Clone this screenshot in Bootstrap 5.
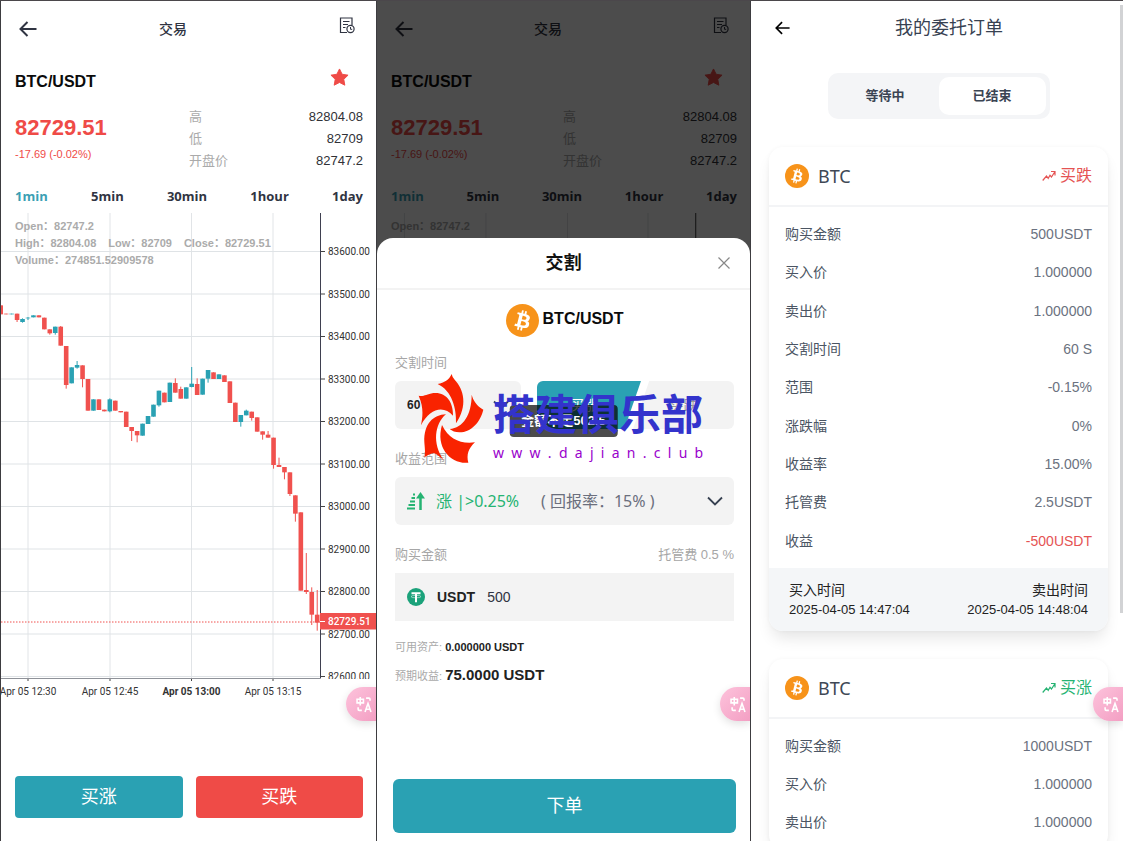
<!DOCTYPE html>
<html lang="zh-CN">
<head>
<meta charset="utf-8">
<meta name="viewport" content="width=device-width, initial-scale=1">
<title>交易</title>
<link href="https://cdn.jsdelivr.net/npm/bootstrap@5.3.0/dist/css/bootstrap.min.css" rel="stylesheet">
<style>
:root{--teal:#2aa1b3;--rise:#25b372;--fall:#ef4b47;--ink:#303442;--mute:#aaa;--soft:#f3f3f3}
body{font-family:"Liberation Sans","Noto Sans CJK SC",sans-serif;font-size:14px;line-height:20px;color:var(--ink);background:#fff}
.screens{display:grid;grid-template-columns:376fr 374fr 373fr;height:100vh;min-height:841px;border-top:1px solid #4b474b}
.screen{position:relative;overflow:hidden;border-left:1px solid #3d3c40;min-width:0}
svg{display:block;flex:none}
a{color:inherit;text-decoration:none}
button{border:0;background:none;padding:0;color:inherit}
button,select,input{font-weight:inherit}
.edge{padding-left:14px;padding-right:13px}
.topbar{height:56px}
.topbar h1{font-size:14px;line-height:20px;font-weight:500;margin:0;padding-right:30px}
.pairbar{height:49px}
.pairbar button{margin:0 14px 8px 0}
.pairname{font-size:16px;line-height:24px;font-weight:700;color:#0b0b0b;margin:0}
.price{font-size:22px;line-height:28px;font-weight:700;color:var(--fall)}
.change{font-size:11px;line-height:16px;color:var(--fall)}
.stats{font-size:13px;line-height:22px;margin:0;width:174px}
.stats dt{font-weight:400;color:var(--mute)}
.stats dd{margin:0;color:#303136}
.periods{height:41px;font:700 13px/20px "Open Sans","Noto Sans",sans-serif;padding-top:14px}
.periods .on{color:#3b9fb4}
.plot{position:relative}
.plot svg{width:100%;height:auto}
.ohlc{position:absolute;left:14px;top:5px;font-size:11px;line-height:17px;font-weight:700;color:#ababab}
.ohlc .d-flex{gap:12px}
.axis{font:10px Roboto,"Open Sans",sans-serif;fill:#333}
.axis.hour{font-weight:700}
.axis.last{fill:#fff;font-weight:500}
.trade{height:42px;border-radius:4px;font-size:18px;line-height:24px;color:#fff}
.bg-rise{background:var(--teal)}
.bg-fall{background:var(--fall)}
.actions{padding-top:72px;gap:13px}
.lang{position:absolute;right:0;top:686px;width:30px;height:34px;border-radius:17px 0 0 17px;background:linear-gradient(135deg,#fdc3dc,#f39fc3);box-shadow:0 3px 9px rgba(0,0,0,.12);padding-left:10px;z-index:5}
.shade{position:absolute;inset:0;background:rgba(0,0,0,.7);padding-top:237px;z-index:2}
.sheet{background:#fff;border-radius:16px 16px 0 0}
.sheet-head{height:52px;border-bottom:2px solid #f3f3f3}
.sheet-head h2{font-size:18px;line-height:24px;font-weight:700;color:#111;margin:0}
.sheet-head button{position:absolute;right:20px}
.sheet-body{padding:14px 16px 8px 18px}
.cap{font-size:13px;line-height:20px;color:#a6a6a6;margin:20px 0 8px}
.sheet-pair{margin-bottom:-4px}
.field{height:48px;background:var(--soft);border-radius:6px}
.field select,.field input{appearance:none;background:none;border:0;outline:0;padding:0;color:inherit}
.dur{width:126px;font-size:12px;font-weight:700;color:#222;padding:0 12px}
.range{display:grid;grid-template-columns:18px 94px 1fr 16px;column-gap:11px;align-items:center;padding:0 11px 0 12px;font-family:"Noto Sans","Noto Sans CJK SC",sans-serif;font-size:16px}
.range select{grid-area:1/2/2/5;height:48px;color:var(--rise)}
.range output{grid-area:1/3;color:#6b6f7d;pointer-events:none}
.range svg{pointer-events:none}
.range .glyph{grid-area:1/1}
.range .caret{grid-area:1/4}
.side{font-size:14px}
.side-up{width:104px;color:#fff;background:var(--teal);clip-path:polygon(0 0,100% 0,84% 100%,0 100%);border-radius:6px 0 0 6px;padding-right:10px}
.side-dn{flex:1;color:#999;background:var(--soft);clip-path:polygon(16% 0,100% 0,100% 100%,0 100%);border-radius:0 6px 6px 0;margin-left:-8px}
.amount{border-radius:0;padding:0 12px}
.amount label{font-weight:700;color:#222}
.hint{font-size:11px;line-height:20px;color:var(--mute)}
.hint b{color:#222}
.hint .big{font-size:15px}
.order-now{height:54px;border-radius:6px;font-size:18px;color:#fff;margin:0 -2px}
.toast-note{position:absolute;left:50%;top:404px;transform:translateX(-50%);background:rgba(0,0,0,.7);color:#fff;border-radius:4px;padding:6px 12px;font-size:13px;line-height:20px;font-weight:700;white-space:nowrap;z-index:3}
.sitemark{position:absolute;left:40px;top:372px;z-index:4;gap:8px;pointer-events:none}
.sitemark strong{display:block;font:700 42px/62px "Noto Sans CJK SC",sans-serif;color:#33c;white-space:nowrap;padding-top:8px}
.sitemark span{display:block;font:14px/20px "Noto Sans",sans-serif;color:#90c;white-space:pre}
.orders{padding:0 15px 0 18px}
.orders-head{height:54px;padding:0 0 0 6px}
.orders-head h1{font-size:18px;line-height:26px;font-weight:400;color:#374151;margin:0}
.seg{width:222px;height:46px;margin:18px auto 28px;background:#f4f5f7;border-radius:10px;padding:4px;font-size:13px;font-weight:700;color:#3b4453}
.seg button{flex:1;border-radius:10px}
.seg .on{background:#fff}
.order{border-radius:14px;background:#fff;box-shadow:0 10px 15px -3px rgba(0,0,0,.1),0 0 4px rgba(0,0,0,.04);margin-bottom:28px;overflow:hidden}
.order header{height:60px;border-bottom:2px solid #f3f4f6;padding:0 16px}
.coin{font:18px/24px "Noto Sans",sans-serif;color:#404855;margin:0 auto 0 9px}
.way{font-size:16px}
.up{color:var(--rise)!important}
.down{color:#e55353!important}
.order dl{height:361px;margin:0;padding:8px 16px;color:#6b7280}
.order dt{font-weight:400;color:#4b5563}
.order dd{margin:0}
.order footer{background:#f4f6f8;padding:12px 20px;height:63px;color:#222}
.order time{display:block;font-size:13px;line-height:20px}
.thumb{position:absolute;right:0;top:4px;width:3px;height:608px;background:#d2d3d5}
</style>
</head>
<body>
<svg width="0" height="0" class="position-absolute" aria-hidden="true">
  <symbol id="back" viewBox="0 0 18 16"><path d="M8.500 1 1.500 8l7 7M2 8h15.500" fill="none" stroke="currentColor" stroke-width="2"/></symbol>
  <symbol id="log" viewBox="0 0 16 17"><path d="M8 15.500H1.500V1H13v7M4 4.500h6.500M4 7.500h5M4 10.500h2.500" fill="none" stroke="currentColor" stroke-width="1.200"/><circle cx="11.500" cy="12" r="3.600" fill="none" stroke="currentColor" stroke-width="1.200"/><path d="M11.500 10v2.300h1.700" fill="none" stroke="currentColor"/></symbol>
  <symbol id="star" viewBox="0 0 20 20"><path d="m10 1 2.800 5.600 6.200.9-4.500 4.400 1.100 6.200L10 15.200l-5.600 2.900 1.100-6.200L1 7.500l6.200-.9z" fill="#ef4b47" stroke="#ef4b47" stroke-linejoin="round"/></symbol>
  <symbol id="btc" viewBox="0 0 32 32"><circle cx="16" cy="16" r="16" fill="#f7931a"/><path fill="#fff" d="M23.200 14c.3-2.100-1.300-3.200-3.500-4l.7-2.800-1.700-.4-.7 2.700-1.400-.3.700-2.800-1.700-.4-.7 2.800-3.500-.9-.5 1.800s1.300.3 1.200.3c.7.200.8.600.8 1l-2 7.900c-.1.200-.3.500-.8.400l-1.200-.3-.9 2 3.300.8-.7 2.900 1.700.4.700-2.800 1.400.4-.7 2.800 1.700.4.700-2.800c3 .6 5.200.3 6.100-2.300.8-2.100 0-3.400-1.500-4.200 1.100-.2 2-1 2.200-2.600zm-3.900 5.600c-.5 2.100-4.200 1-5.300.7l.9-3.800c1.200.3 5 .9 4.400 3.100zm.5-5.600c-.5 2-3.500 1-4.500.7l.9-3.400c1 .2 4.200.7 3.600 2.700z"/></symbol>
  <symbol id="trend" viewBox="0 0 14 12"><path d="M.7 10.500 4.500 6l1.700 2.300 1.800-3L9.500 7 13 1.500M9 1.500h4v4" fill="none" stroke="currentColor" stroke-width="1.200"/></symbol>
  <symbol id="caret" viewBox="0 0 16 16"><path d="m1 4.500 7 7 7-7" fill="none" stroke="#374151" stroke-width="1.800"/></symbol>
  <symbol id="translate" viewBox="0 0 16 16"><path d="M1 3h6v3.500H1zM4 1v8M9.500 2h2.700q1 0 1 1v1.500M2 10.500v2q0 1 1 1h2.500M8.500 15l2.800-8 2.800 8M9.500 12.500h3.600" fill="none" stroke="#fff" stroke-width="1.500"/></symbol>
</svg>

<main class="screens">
  <section class="screen">
    <header class="topbar edge d-flex justify-content-between align-items-center">
      <a href="#" aria-label="返回" class="ms-1"><svg width="18" height="16"><use href="#back"/></svg></a>
      <h1>交易</h1>
      <a href="#" aria-label="委托订单" class="me-2 mb-2"><svg width="16" height="17"><use href="#log"/></svg></a>
    </header>
    <div class="pairbar edge d-flex justify-content-between align-items-center">
      <p class="pairname">BTC/USDT</p>
      <button type="button" aria-label="收藏"><svg width="19" height="19"><use href="#star"/></svg></button>
    </div>
    <div class="edge d-flex justify-content-between">
      <div class="pt-2"><div class="price">82729.51</div><div class="change mt-1">-17.69 (-0.02%)</div></div>
      <dl class="stats">
        <div class="d-flex justify-content-between"><dt>高</dt><dd>82804.08</dd></div>
        <div class="d-flex justify-content-between"><dt>低</dt><dd>82709</dd></div>
        <div class="d-flex justify-content-between"><dt>开盘价</dt><dd>82747.2</dd></div>
      </dl>
    </div>
    <nav class="periods edge d-flex justify-content-between align-items-start">
      <a href="#" class="on">1min</a><a href="#">5min</a><a href="#">30min</a><a href="#">1hour</a><a href="#">1day</a>
    </nav>
    <div class="plot">
      <svg id="chart" viewBox="1 213 375 491" role="img" aria-label="K线图"></svg>
      <div class="ohlc">
        <div>Open：82747.2</div>
        <div class="d-flex"><span>High：82804.08</span><span>Low：82709</span><span>Close：82729.51</span></div>
        <div>Volume：274851.52909578</div>
      </div>
    </div>
    <div class="edge d-flex actions">
      <button type="button" class="trade bg-rise flex-fill">买涨</button>
      <button type="button" class="trade bg-fall flex-fill">买跌</button>
    </div>
    <button type="button" class="lang" aria-label="翻译"><svg width="17" height="17"><use href="#translate"/></svg></button>
  </section>

  <section class="screen">
    <header class="topbar edge d-flex justify-content-between align-items-center">
      <a href="#" aria-label="返回" class="ms-1"><svg width="18" height="16"><use href="#back"/></svg></a>
      <h1>交易</h1>
      <a href="#" aria-label="委托订单" class="me-2 mb-2"><svg width="16" height="17"><use href="#log"/></svg></a>
    </header>
    <div class="pairbar edge d-flex justify-content-between align-items-center">
      <p class="pairname">BTC/USDT</p>
      <button type="button" aria-label="收藏"><svg width="19" height="19"><use href="#star"/></svg></button>
    </div>
    <div class="edge d-flex justify-content-between">
      <div class="pt-2"><div class="price">82729.51</div><div class="change mt-1">-17.69 (-0.02%)</div></div>
      <dl class="stats">
        <div class="d-flex justify-content-between"><dt>高</dt><dd>82804.08</dd></div>
        <div class="d-flex justify-content-between"><dt>低</dt><dd>82709</dd></div>
        <div class="d-flex justify-content-between"><dt>开盘价</dt><dd>82747.2</dd></div>
      </dl>
    </div>
    <nav class="periods edge d-flex justify-content-between align-items-start">
      <a href="#" class="on">1min</a><a href="#">5min</a><a href="#">30min</a><a href="#">1hour</a><a href="#">1day</a>
    </nav>
    <div class="plot">
      <svg viewBox="1 213 375 30" aria-hidden="true"><path d="M28.500 213v30M110.500 213v30M192.500 213v30M273.500 213v30" stroke="#dfe2e5"/><path d="M321.500 213v30" stroke="#333"/></svg>
      <div class="ohlc">Open：82747.2</div>
    </div>

    <div class="shade d-flex flex-column">
      <form class="sheet flex-fill d-flex flex-column" onsubmit="return false">
        <div class="sheet-head position-relative d-flex justify-content-center align-items-center">
          <h2>交割</h2>
          <button type="button" aria-label="关闭"><svg width="12" height="12" viewBox="0 0 12 12"><path d="m.5.5 11 11m0-11-11 11" stroke="#888" stroke-width="1.200"/></svg></button>
        </div>
        <div class="sheet-body flex-fill d-flex flex-column">
          <div class="sheet-pair d-flex justify-content-center align-items-center gap-1">
            <svg width="33" height="33"><use href="#btc"/></svg><span class="pairname pb-1">BTC/USDT</span>
          </div>
          <label class="cap" for="dur">交割时间</label>
          <div class="d-flex">
            <div class="field dur d-flex align-items-center justify-content-between">
              <select id="dur"><option>60 S</option></select><svg width="16" height="16"><use href="#caret"/></svg>
            </div>
            <button type="button" class="field side side-up ms-3">买涨</button>
            <button type="button" class="field side side-dn">买跌</button>
          </div>
          <label class="cap" for="range">收益范围</label>
          <div class="field range">
            <svg class="glyph" width="18" height="18" viewBox="0 0 18 18"><path d="M0 16.500h8M1.500 13h6.500M3 9.500h5M4.500 6H8M6 2.500h2" stroke="#25b372" stroke-width="1.800"/><path d="M13.500 18V4" stroke="#25b372" stroke-width="2.500"/><path d="M13.500 0 18 6.500H9z" fill="#25b372"/></svg>
            <select id="range"><option>涨 |&gt;0.25%</option></select>
            <output for="range">( 回报率：15% )</output>
            <svg class="caret" width="16" height="16"><use href="#caret"/></svg>
          </div>
          <div class="cap d-flex justify-content-between"><label for="amt">购买金额</label><span>托管费 0.5 %</span></div>
          <div class="field amount d-flex align-items-center">
            <svg width="18" height="18" viewBox="0 0 18 18"><circle cx="9" cy="9" r="9" fill="#1ba27a"/><path d="M4.500 5.300h9M9 5.300v9" stroke="#fff" stroke-width="2"/><ellipse cx="9" cy="8.600" rx="5" ry="1.200" fill="none" stroke="#fff" stroke-width=".5"/></svg>
            <label for="amt" class="ms-2 ps-1">USDT</label>
            <input id="amt" type="text" value="500" class="flex-fill ms-2 ps-1">
          </div>
          <div class="hint mt-3">可用资产: <b>0.000000 USDT</b></div>
          <div class="hint mt-2">预期收益: <b class="big">75.0000 USDT</b></div>
          <button type="submit" class="order-now bg-rise mt-auto">下单</button>
        </div>
      </form>
    </div>
    <div class="toast-note" role="status">金额不足502.5</div>
    <div class="sitemark d-flex">
      <svg width="68" height="92" viewBox="20 24 204 276" aria-hidden="true"><g fill="#f92300">
        <path d="M124 27q1 8 9 17c28 30 40 78 4 131 2-44-12-98-55-118 20-4 34-12 42-30z"/>
        <path d="M184 89c4 17 16 34 35 45-8 34-34 68-72 68-12 0-22-4-29-10 40-4 66-42 66-103z"/>
        <path d="M95 180c20 42 56 58 99 52-20 18-26 38-20 61-50 6-100-43-79-113z"/>
        <path d="M107 148c-34 28-42 88-7 138-13-13-24-20-29-21-7-1-18 6-29 12 4-12 1-30 0-46-2-54 27-82 65-83z"/>
        <path d="M25 92c14 4 22-4 44-8 38-4 60 26 59 68-28-32-70-22-96 29 4-22 10-50-7-89z"/>
      </g></svg>
      <div><strong>搭建俱乐部</strong><span>w  w  w  .  d  a  j  i  a  n  .  c  l  u  b</span></div>
    </div>
    <button type="button" class="lang" aria-label="翻译"><svg width="17" height="17"><use href="#translate"/></svg></button>
  </section>

  <section class="screen">
    <div class="orders">
      <header class="orders-head d-flex align-items-center">
        <a href="#" aria-label="返回" class="text-black"><svg width="15" height="14"><use href="#back"/></svg></a>
        <h1 class="flex-fill text-center">我的委托订单</h1>
      </header>
      <div class="seg d-flex"><button type="button">等待中</button><button type="button" class="on">已结束</button></div>
      <article class="order">
        <header class="d-flex align-items-center">
          <svg width="24" height="24"><use href="#btc"/></svg><span class="coin">BTC</span>
          <svg class="down me-1" width="14" height="12"><use href="#trend"/></svg><span class="way down">买跌</span>
        </header>
        <dl class="d-flex flex-column">
          <div class="flex-fill d-flex justify-content-between align-items-center"><dt>购买金额</dt><dd>500USDT</dd></div>
          <div class="flex-fill d-flex justify-content-between align-items-center"><dt>买入价</dt><dd>1.000000</dd></div>
          <div class="flex-fill d-flex justify-content-between align-items-center"><dt>卖出价</dt><dd>1.000000</dd></div>
          <div class="flex-fill d-flex justify-content-between align-items-center"><dt>交割时间</dt><dd>60 S</dd></div>
          <div class="flex-fill d-flex justify-content-between align-items-center"><dt>范围</dt><dd>-0.15%</dd></div>
          <div class="flex-fill d-flex justify-content-between align-items-center"><dt>涨跌幅</dt><dd>0%</dd></div>
          <div class="flex-fill d-flex justify-content-between align-items-center"><dt>收益率</dt><dd>15.00%</dd></div>
          <div class="flex-fill d-flex justify-content-between align-items-center"><dt>托管费</dt><dd>2.5USDT</dd></div>
          <div class="flex-fill d-flex justify-content-between align-items-center"><dt>收益</dt><dd class="down">-500USDT</dd></div>
        </dl>
        <footer class="d-flex justify-content-between">
          <div>买入时间<time>2025-04-05 14:47:04</time></div>
          <div class="text-end">卖出时间<time>2025-04-05 14:48:04</time></div>
        </footer>
      </article>
      <article class="order">
        <header class="d-flex align-items-center">
          <svg width="24" height="24"><use href="#btc"/></svg><span class="coin">BTC</span>
          <svg class="up me-1" width="14" height="12"><use href="#trend"/></svg><span class="way up">买涨</span>
        </header>
        <dl class="d-flex flex-column h-auto">
          <div class="py-2 my-1 d-flex justify-content-between align-items-center lh-1"><dt>购买金额</dt><dd>1000USDT</dd></div>
          <div class="py-2 my-1 d-flex justify-content-between align-items-center lh-1"><dt>买入价</dt><dd>1.000000</dd></div>
          <div class="py-2 my-1 d-flex justify-content-between align-items-center lh-1"><dt>卖出价</dt><dd>1.000000</dd></div>
        </dl>
      </article>
    </div>
    <div class="thumb"></div>
    <button type="button" class="lang" aria-label="翻译"><svg width="17" height="17"><use href="#translate"/></svg></button>
  </section>
</main>

<script>
// One candle per minute: direction, body top, body bottom, wick top, wick bottom
// (thirds of a chart unit, measured down from y = 280; 0 = wick ends at the body).
const candles = [
["r",76,103],["r",101,103],["g",101,103],["r",101,120,0,126],["g",117,126,115,128],["g",113,115,111,120],["g",106,112],["r",106,112],["r",113,148],["r",148,160,0,164],
["g",140,159,0,164],["r",140,197,138],["r",198,315,0,326],["g",262,310],["g",255,263,243,266],["r",256,297,0,322],["r",297,392],["g",358,392],["r",358,390],["r",389,394],
["g",358,394,355,397],["r",362,392],["r",393,397],["r",395,441],["r",441,453,0,483],["r",453,466,0,487],["g",431,467],["g",408,432],["g",374,410],["g",332,376,0,380],
["r",338,367],["g",308,366],["r",309,338,295],["r",327,356,320],["g",322,356],["g",311,321,261,322],["r",312,345,295],["g",296,344],["g",270,296,0,308],["r",277,297],
["g",283,297],["r",286,306],["r",304,369],["r",368,426],["g",405,426,0,440],["g",392,406,389],["r",395,414,0,422],["r",412,455],["r",454,464,0,479],["r",464,473,453],
["r",473,555,0,566],["r",555,561,533],["r",561,577,0,598],["r",577,642,0,648],["r",646,701,0,725],["r",697,932],["r",930,936,819,942],["r",936,1004,922,1035],["r",1004,1028,930,1052]];
const y = v => 280 + v / 3, fill = {r:"#f0514e", g:"#2aa1b3"};
let s = '<clipPath id="area"><rect x="1" y="213" width="375" height="466"/></clipPath>';
const times = [[28,"Apr 05 12:30"],[110,"Apr 05 12:45"],[191.5,"Apr 05 13:00"],[273,"Apr 05 13:15"]];
times.forEach(([x,t],i) => {
  s += `<path d="M${x} 213V678" stroke="#e1e4e7"/><path d="M${x} 678v3" stroke="#444"/>`;
  s += `<text class="axis${i===2?' hour':''}" x="${x}" y="694.500" text-anchor="middle">${t}</text>`;
});
for (let i = 0; i < 11; i++) {
  const gy = 251.5 + i * 42.5;
  s += `<path d="M1 ${gy}H320" stroke="#dfe3e6"/><path d="M320 ${gy}h5" stroke="#444"/>`;
  s += `<text class="axis" x="328" y="${gy+3.5}" clip-path="url(#area)">${83600-i*100}.00</text>`;
}
candles.forEach(([d,t,b,wt,wb],i) => {
  const cx = .7 + i * 5.457;
  s += `<path d="M${cx} ${y(wt||t)}V${y(wb||b)}" stroke="${fill[d]}"/>`;
  s += `<rect x="${cx-2.3}" y="${y(t)}" width="4.600" height="${(b-t)/3}" fill="${fill[d]}"/>`;
});
s += '<path d="M1 622H320" stroke="#f0514e" stroke-dasharray="1.500 1.500"/>';
s += '<path d="M320.500 213V678.500" stroke="#3f4050"/><path d="M1 678.500H320" stroke="#8f9299"/>';
s += '<rect x="320" y="613" width="56" height="16.500" fill="#f0514e"/><path d="M320 621.500h5" stroke="#fff"/><text class="axis last" x="328" y="625">82729.51</text>';
document.getElementById("chart").innerHTML = s;
</script>
<script src="https://cdn.jsdelivr.net/npm/bootstrap@5.3.0/dist/js/bootstrap.bundle.min.js"></script>
</body>
</html>
